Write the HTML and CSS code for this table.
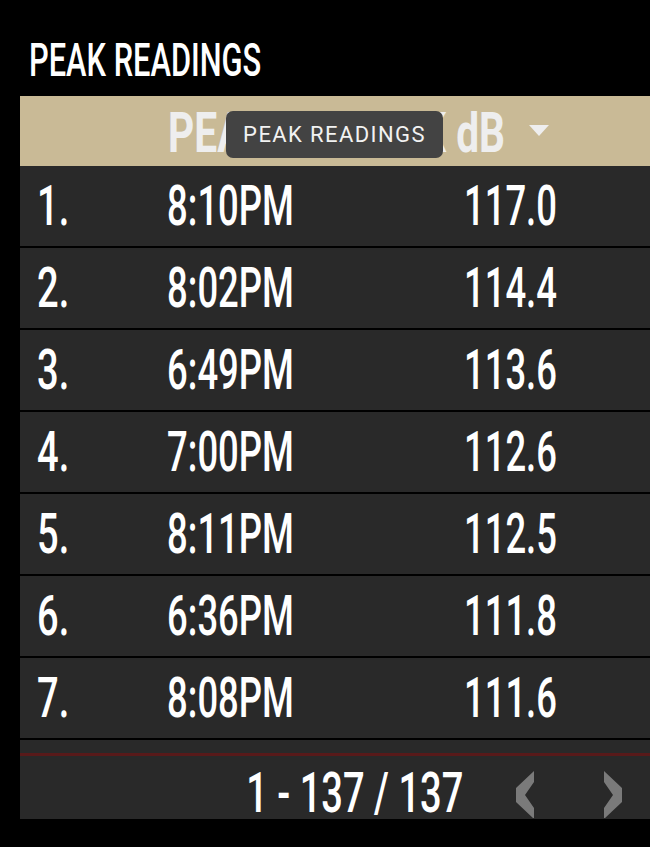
FILE: index.html
```html
<!DOCTYPE html>
<html>
<head>
<meta charset="utf-8">
<link rel="stylesheet" href="styles.css">
</head>
<body>
<div class="title"><span class="sq sq-l">PEAK READINGS</span></div>
<div class="table">
  <div class="thead">
    <div class="th c1"></div>
    <div class="th c2"><span class="sq sq-l hb">PEAK</span></div>
    <div class="th c3"><span class="sq sq-r hb">PEAK dB</span>
      <svg class="sort" width="20" height="11" viewBox="0 0 20 11"><polygon points="0,0 20,0 10,11" fill="#eeeeee"/></svg>
    </div>
  </div>
  <div class="row"><div class="c1"><span class="sq sq-l">1.</span></div><div class="c2"><span class="sq">8:10PM</span></div><div class="c3"><span class="sq">117.0</span></div></div>
  <div class="row"><div class="c1"><span class="sq sq-l">2.</span></div><div class="c2"><span class="sq">8:02PM</span></div><div class="c3"><span class="sq">114.4</span></div></div>
  <div class="row"><div class="c1"><span class="sq sq-l">3.</span></div><div class="c2"><span class="sq">6:49PM</span></div><div class="c3"><span class="sq">113.6</span></div></div>
  <div class="row"><div class="c1"><span class="sq sq-l">4.</span></div><div class="c2"><span class="sq">7:00PM</span></div><div class="c3"><span class="sq">112.6</span></div></div>
  <div class="row"><div class="c1"><span class="sq sq-l">5.</span></div><div class="c2"><span class="sq">8:11PM</span></div><div class="c3"><span class="sq">112.5</span></div></div>
  <div class="row"><div class="c1"><span class="sq sq-l">6.</span></div><div class="c2"><span class="sq">6:36PM</span></div><div class="c3"><span class="sq">111.8</span></div></div>
  <div class="row"><div class="c1"><span class="sq sq-l">7.</span></div><div class="c2"><span class="sq">8:08PM</span></div><div class="c3"><span class="sq">111.6</span></div></div>
  <div class="foot">
    <div class="pager">
      <span class="sq sq-r">1 - 137 / 137</span>
      <svg class="chev prev" width="19" height="47" viewBox="0 0 19 47"><polygon points="18,0 18,11 9,24 18,37 18,48 0,31 0,17" fill="#7a7a7a"/></svg>
      <svg class="chev next" width="19" height="47" viewBox="0 0 19 47"><polygon points="1,0 1,11 10,24 1,37 1,48 19,31 19,17" fill="#7a7a7a"/></svg>
    </div>
  </div>
  <div class="tooltip">PEAK READINGS</div>
</div>
</body>
</html>
```
FILE: styles.css
```css
html, body {
  margin: 0;
  padding: 0;
  background: #000;
  overflow: hidden;
}
body {
  width: 650px;
  height: 847px;
  font-family: Roboto, "Liberation Sans", sans-serif;
  color: #fff;
}
.sq {
  display: inline-block;
  transform: scaleX(0.65);
  transform-origin: center;
  white-space: nowrap;
}
.sq-l { transform-origin: left center; }
.sq-r { transform-origin: right center; }

.title {
  padding: 37px 0 0 29px;
  height: 46px;
  margin-bottom: 13px;
  font-size: 46px;
  line-height: 46px;
  font-weight: 500;
}
.title .sq { transform: scaleX(0.67); }

.table {
  position: relative;
  margin-left: 20px;
  width: 630px;
}
.thead, .row {
  display: grid;
  grid-template-columns: 80px 260px minmax(0, 1fr);
  align-items: center;
}
.thead {
  height: 70px;
  background: #c9ba96;
  color: #eeeeee;
  font-size: 55px;
  line-height: 1;
  font-weight: 700;
  padding-top: 4px;
  box-sizing: border-box;
}
.hb { transform: scaleX(0.74); }
.th { min-width: 0; }
.th.c2 { padding-left: 68px; }
.th.c3 {
  display: flex;
  align-items: center;
  justify-content: flex-end;
  padding-right: 101px;
}
.sort { flex: none; margin-left: 24px; margin-top: -6px; }

.row {
  height: 80px;
  background: #292929;
  border-bottom: 2px solid #000;
  font-size: 56px;
  line-height: 1;
  font-weight: 500;
}
.row .c1 { padding-left: 17px; }
.row .c1 .sq { transform: scaleX(0.68); }
.row .c2 { text-align: center; }
.row .c3 { text-align: center; padding-left: 10px; }

.foot {
  height: 79px;
  background: #292929;
  padding-top: 13px;
  box-sizing: border-box;
}
.pager {
  border-top: 3px solid #581a1a;
  height: 63px;
  display: flex;
  justify-content: flex-end;
  align-items: flex-start;
  padding-right: 28px;
  font-size: 56px;
  line-height: 48px;
  font-weight: 500;
}
.pager .sq {
  transform: scaleX(0.68);
  margin-top: 13px;
}
.chev { flex: none; margin-top: 15px; }
.prev { margin-left: 53px; }
.next { margin-left: 68px; }

.tooltip {
  position: absolute;
  left: 206px;
  top: 15px;
  width: 217px;
  height: 47px;
  box-sizing: border-box;
  background: #434343;
  border-radius: 7px;
  color: #f2f2f2;
  font-size: 22px;
  letter-spacing: 1.4px;
  line-height: 47px;
  text-align: center;
  font-weight: 400;
}
```
